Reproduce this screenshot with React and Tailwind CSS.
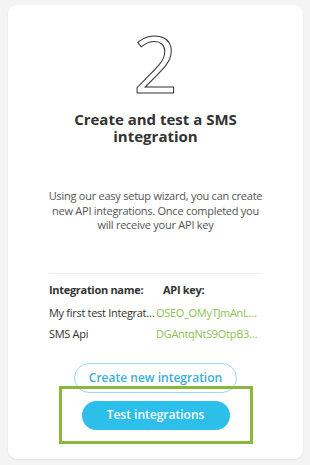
export default function App() {
  return (
    <div className="w-[310px] h-[465px] bg-[#f4f4f4] pt-[5px] px-[8px]" style={{ fontFamily: '"Open Sans", sans-serif' }}>
      <div className="relative w-[295px] h-[454px] bg-white rounded-[9px] shadow-[0_1px_2px_rgba(0,0,0,0.08)] flex flex-col items-center">
        <div className="mt-[12px] h-[91px] flex items-center justify-center text-[78px] leading-none text-transparent [-webkit-text-stroke:1px_#333]">2</div>
        <h1 className="mt-[3px] text-[15px] leading-[17px] font-bold text-[#333] text-center w-[200px]">Create and test a SMS integration</h1>
        <p className="mt-[44px] text-[11px] leading-[14.5px] tracking-[-0.25px] text-[#555] text-center w-[222px]">Using our easy setup wizard, you can create new API integrations. Once completed you will receive your API key</p>
        <div className="mt-[40px] w-[213px] border-t border-[#eee]"></div>
        <div className="mt-[8px] w-[213px] text-[11px] tracking-[-0.3px] text-[#333]">
          <div className="flex font-bold leading-[16px]">
            <span className="w-[114px]">Integration name:</span>
            <span>API key:</span>
          </div>
          <div className="flex mt-[7px] leading-[16px]">
            <span className="w-[107px] truncate">My first test Integration</span>
            <span className="flex-1 truncate text-[#8cc152]">OSEO_OMyTJmAnLxQbx</span>
          </div>
          <div className="flex mt-[5px] leading-[16px]">
            <span className="w-[107px] truncate">SMS Api</span>
            <span className="flex-1 truncate text-[#8cc152]">DGAntqNtS9OtpB37Kz</span>
          </div>
        </div>
        <button className="mt-[21px] w-[163px] h-[30px] rounded-full border border-[#9ad8ef] text-[#3aafd8] text-[12px] font-semibold">Create new integration</button>
        <button className="mt-[8px] w-[148px] h-[29px] rounded-full bg-[#2bbfe9] text-white text-[12px] font-semibold">Test integrations</button>
        <div className="absolute left-[51px] top-[381px] w-[194px] h-[58px] border-[3px] border-[#8ab83c]"></div>
      </div>
    </div>
  );
}
